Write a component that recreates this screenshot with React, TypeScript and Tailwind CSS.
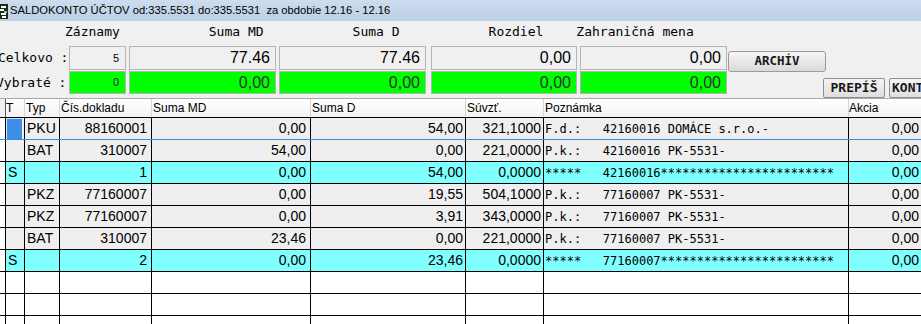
const mono = "font-['DejaVu_Sans_Mono',monospace]";
const sans = "font-['Liberation_Sans',Arial,sans-serif]";

type Row = {
  t?: string;
  typ?: string;
  doc?: string;
  md?: string;
  d?: string;
  suv?: string;
  note?: string;
  akcia?: string;
  kind: 'gray' | 'sum' | 'empty';
  selected?: boolean;
};

const rows: Row[] = [
  {
    kind: 'gray',
    selected: true,
    typ: 'PKU',
    doc: '88160001',
    md: '0,00',
    d: '54,00',
    suv: '321,1000',
    note: 'F.d.:   42160016 DOMÁCE s.r.o.-',
    akcia: '0,00',
  },
  {
    kind: 'gray',
    typ: 'BAT',
    doc: '310007',
    md: '54,00',
    d: '0,00',
    suv: '221,0000',
    note: 'P.k.:   42160016 PK-5531-',
    akcia: '0,00',
  },
  {
    kind: 'sum',
    t: 'S',
    doc: '1',
    md: '0,00',
    d: '54,00',
    suv: '0,0000',
    note: '*****   42160016************************',
    akcia: '0,00',
  },
  {
    kind: 'gray',
    typ: 'PKZ',
    doc: '77160007',
    md: '0,00',
    d: '19,55',
    suv: '504,1000',
    note: 'P.k.:   77160007 PK-5531-',
    akcia: '0,00',
  },
  {
    kind: 'gray',
    typ: 'PKZ',
    doc: '77160007',
    md: '0,00',
    d: '3,91',
    suv: '343,0000',
    note: 'P.k.:   77160007 PK-5531-',
    akcia: '0,00',
  },
  {
    kind: 'gray',
    typ: 'BAT',
    doc: '310007',
    md: '23,46',
    d: '0,00',
    suv: '221,0000',
    note: 'P.k.:   77160007 PK-5531-',
    akcia: '0,00',
  },
  {
    kind: 'sum',
    t: 'S',
    doc: '2',
    md: '0,00',
    d: '23,46',
    suv: '0,0000',
    note: '*****   77160007************************',
    akcia: '0,00',
  },
  { kind: 'empty' },
  { kind: 'empty' },
  { kind: 'empty' },
];

const AppIcon = () => (
  <svg width="8" height="16" viewBox="0 0 8 16" className="shrink-0">
    <rect x="0" y="1" width="8" height="15" fill="#1d2a1d" />
    <rect x="1" y="3" width="5" height="2" fill="#ffffff" />
    <rect x="0" y="6" width="4" height="2" fill="#ffffff" />
    <rect x="4" y="8" width="3" height="2" fill="#7fd37f" />
    <rect x="1" y="10" width="5" height="2" fill="#ffffff" />
    <rect x="2" y="13" width="4" height="2" fill="#ffffff" />
  </svg>
);

interface BoxProps {
  value: string;
  green?: boolean;
  small?: boolean;
  className: string;
}

const ValueBox = ({ value, green, small, className }: BoxProps) => {
  return (
    <div
      className={`flex h-full shrink-0 items-center justify-end border border-[#b4b4b4] ${sans} ${
        green ? 'bg-[#00ff00] text-[#2e2e2e]' : 'bg-[#f0f0f0] text-black'
      } ${small ? 'pr-[6px] text-[11px]' : 'pr-[5px] text-[16px]'} ${className}`}
    >
      {value}
    </div>
  );
};

const RowLabel = ({ text, shift }: { text: string; shift: string }) => (
  <div className={`flex w-[69px] shrink-0 items-center whitespace-pre text-[13px] ${mono}`}>
    <span className={shift}>{text}</span>
  </div>
);

const TopPanel = () => {
  return (
    <div className="flex h-[77px] bg-[#f0f0f0]">
      <div className="flex w-[727px] shrink-0 flex-col">
        <div className={`flex h-[21px] items-center whitespace-pre text-[13px] text-black ${mono}`}>
          <span className="ml-[65px]">Záznamy</span>
          <span className="ml-[89px]">Suma MD</span>
          <span className="ml-[89px]">Suma D</span>
          <span className="ml-[89px]">Rozdiel</span>
          <span className="ml-[33px]">Zahraničná mena</span>
        </div>

        <div className="mt-[4px] flex h-[24px]">
          <RowLabel text="Celkovo :" shift="-ml-[2px]" />
          <ValueBox value="5" small className="w-[57px]" />
          <ValueBox value="77.46" className="ml-[3px] w-[147px]" />
          <ValueBox value="77.46" className="ml-[3px] w-[147px]" />
          <ValueBox value="0,00" className="ml-[5px] w-[146px]" />
          <ValueBox value="0,00" className="ml-[3px] w-[147px]" />
        </div>

        <div className="mt-[1px] flex h-[23px]">
          <RowLabel text="Vybraté :" shift="-ml-[4px]" />
          <ValueBox value="0" green small className="w-[57px]" />
          <ValueBox value="0,00" green className="ml-[3px] w-[147px]" />
          <ValueBox value="0,00" green className="ml-[3px] w-[147px]" />
          <ValueBox value="0,00" green className="ml-[5px] w-[146px]" />
          <ValueBox value="0,00" green className="ml-[3px] w-[147px]" />
        </div>
      </div>

      <div className="flex flex-1 flex-col">
        <button
          className={`ml-[1px] mt-[30px] flex h-[22px] w-[98px] items-center justify-center rounded-[3px] border border-[#9a9a9a] bg-gradient-to-b from-[#f6f6f6] to-[#dadada] text-[12.5px] font-bold text-[#1a1a1a] ${mono}`}
        >
          ARCHÍV
        </button>
        <div className="mt-[6px] flex">
          <button
            className={`ml-[96px] flex h-[20px] w-[62px] shrink-0 items-center justify-center rounded-[2px] border border-[#8f8f8f] bg-gradient-to-b from-[#f4f4f4] to-[#dedede] text-[13px] font-bold text-[#1a1a1a] ${mono}`}
          >
            PREPÍŠ
          </button>
          <button
            className={`ml-[4px] flex h-[20px] w-[70px] shrink-0 items-center justify-start whitespace-pre rounded-[2px] border border-[#8f8f8f] bg-gradient-to-b from-[#f4f4f4] to-[#dedede] pl-[2px] text-[13px] font-bold text-[#1a1a1a] ${mono}`}
          >
            KONTROLA
          </button>
        </div>
      </div>
    </div>
  );
};

const GridHeader = () => {
  return (
    <div
      className={`flex h-[20px] border-t border-b border-t-[#a8a8a8] border-b-black bg-gradient-to-b from-white to-[#f2f2f2] text-[12px] text-black ${sans}`}
    >
      <div className="w-[6px] shrink-0 border-r border-[#555] bg-[#f0f0f0]" />
      <div className="flex w-[19px] shrink-0 items-center border-r border-[#d6d6d6]">T</div>
      <div className="flex w-[35px] shrink-0 items-center border-r border-[#d6d6d6] pl-[1px]">Typ</div>
      <div className="flex w-[92px] shrink-0 items-center border-r border-[#d6d6d6] pl-[1px]">Čís.dokladu</div>
      <div className="flex w-[159px] shrink-0 items-center border-r border-[#d6d6d6] pl-[1px]">Suma MD</div>
      <div className="flex w-[155px] shrink-0 items-center border-r border-[#d6d6d6] pl-[1px]">Suma D</div>
      <div className="flex w-[78px] shrink-0 items-center border-r border-[#d6d6d6] pl-[1px]">Súvzť.</div>
      <div className="flex w-[305px] shrink-0 items-center border-r border-[#d6d6d6] pl-[1px]">Poznámka</div>
      <div className="flex w-[80px] shrink-0 items-center">Akcia</div>
    </div>
  );
};

const GridRow = ({ row }: { row: Row }) => {
  const bg =
    row.kind === 'gray' ? 'bg-[#efefef]' : row.kind === 'sum' ? 'bg-[#80ffff]' : 'bg-white';
  const bottom = row.selected ? 'border-b-[#3d8ad8]' : 'border-b-black';
  const cell = 'flex h-full shrink-0 items-center border-r border-black';

  return (
    <div className={`flex h-[22px] border-b ${bottom} ${bg} text-[14px] text-black ${sans}`}>
      <div className={`${cell} w-[6px] bg-white`} />
      <div className={`${cell} w-[19px] pl-[2px]`}>
        {row.selected ? (
          <div className="-ml-[2px] h-full w-full bg-[#3f8ee8] shadow-[inset_1px_1px_0_#cfe4fb]" />
        ) : (
          row.t
        )}
      </div>
      <div className={`${cell} w-[35px] pl-[2px]`}>{row.typ}</div>
      <div className={`${cell} w-[92px] justify-end pr-[4px]`}>{row.doc}</div>
      <div className={`${cell} w-[159px] justify-end pr-[4px]`}>{row.md}</div>
      <div className={`${cell} w-[155px] justify-end pr-[2px]`}>{row.d}</div>
      <div className={`${cell} w-[78px] justify-end pr-[2px]`}>{row.suv}</div>
      <div className={`${cell} w-[305px] whitespace-pre pl-[1px] text-[12px] ${mono}`}>{row.note}</div>
      <div className={`${cell} w-[74px] justify-end pr-[3px]`}>{row.akcia}</div>
    </div>
  );
};

const App = () => {
  return (
    <div className="h-[324px] w-[921px] overflow-hidden bg-[#f0f0f0]">
      <div
        className={`flex h-[21px] items-center gap-[2px] bg-gradient-to-b from-[#cddcee] to-[#bccfe6] text-[11.2px] text-black ${sans}`}
      >
        <AppIcon />
        <span className="whitespace-pre">
          SALDOKONTO ÚČTOV od:335.5531 do:335.5531  za obdobie 12.16 - 12.16
        </span>
      </div>

      <TopPanel />

      <div className="w-[1000px]">
        <GridHeader />
        {rows.map((row, i) => (
          <GridRow key={i} row={row} />
        ))}
      </div>
    </div>
  );
};

export default App;
